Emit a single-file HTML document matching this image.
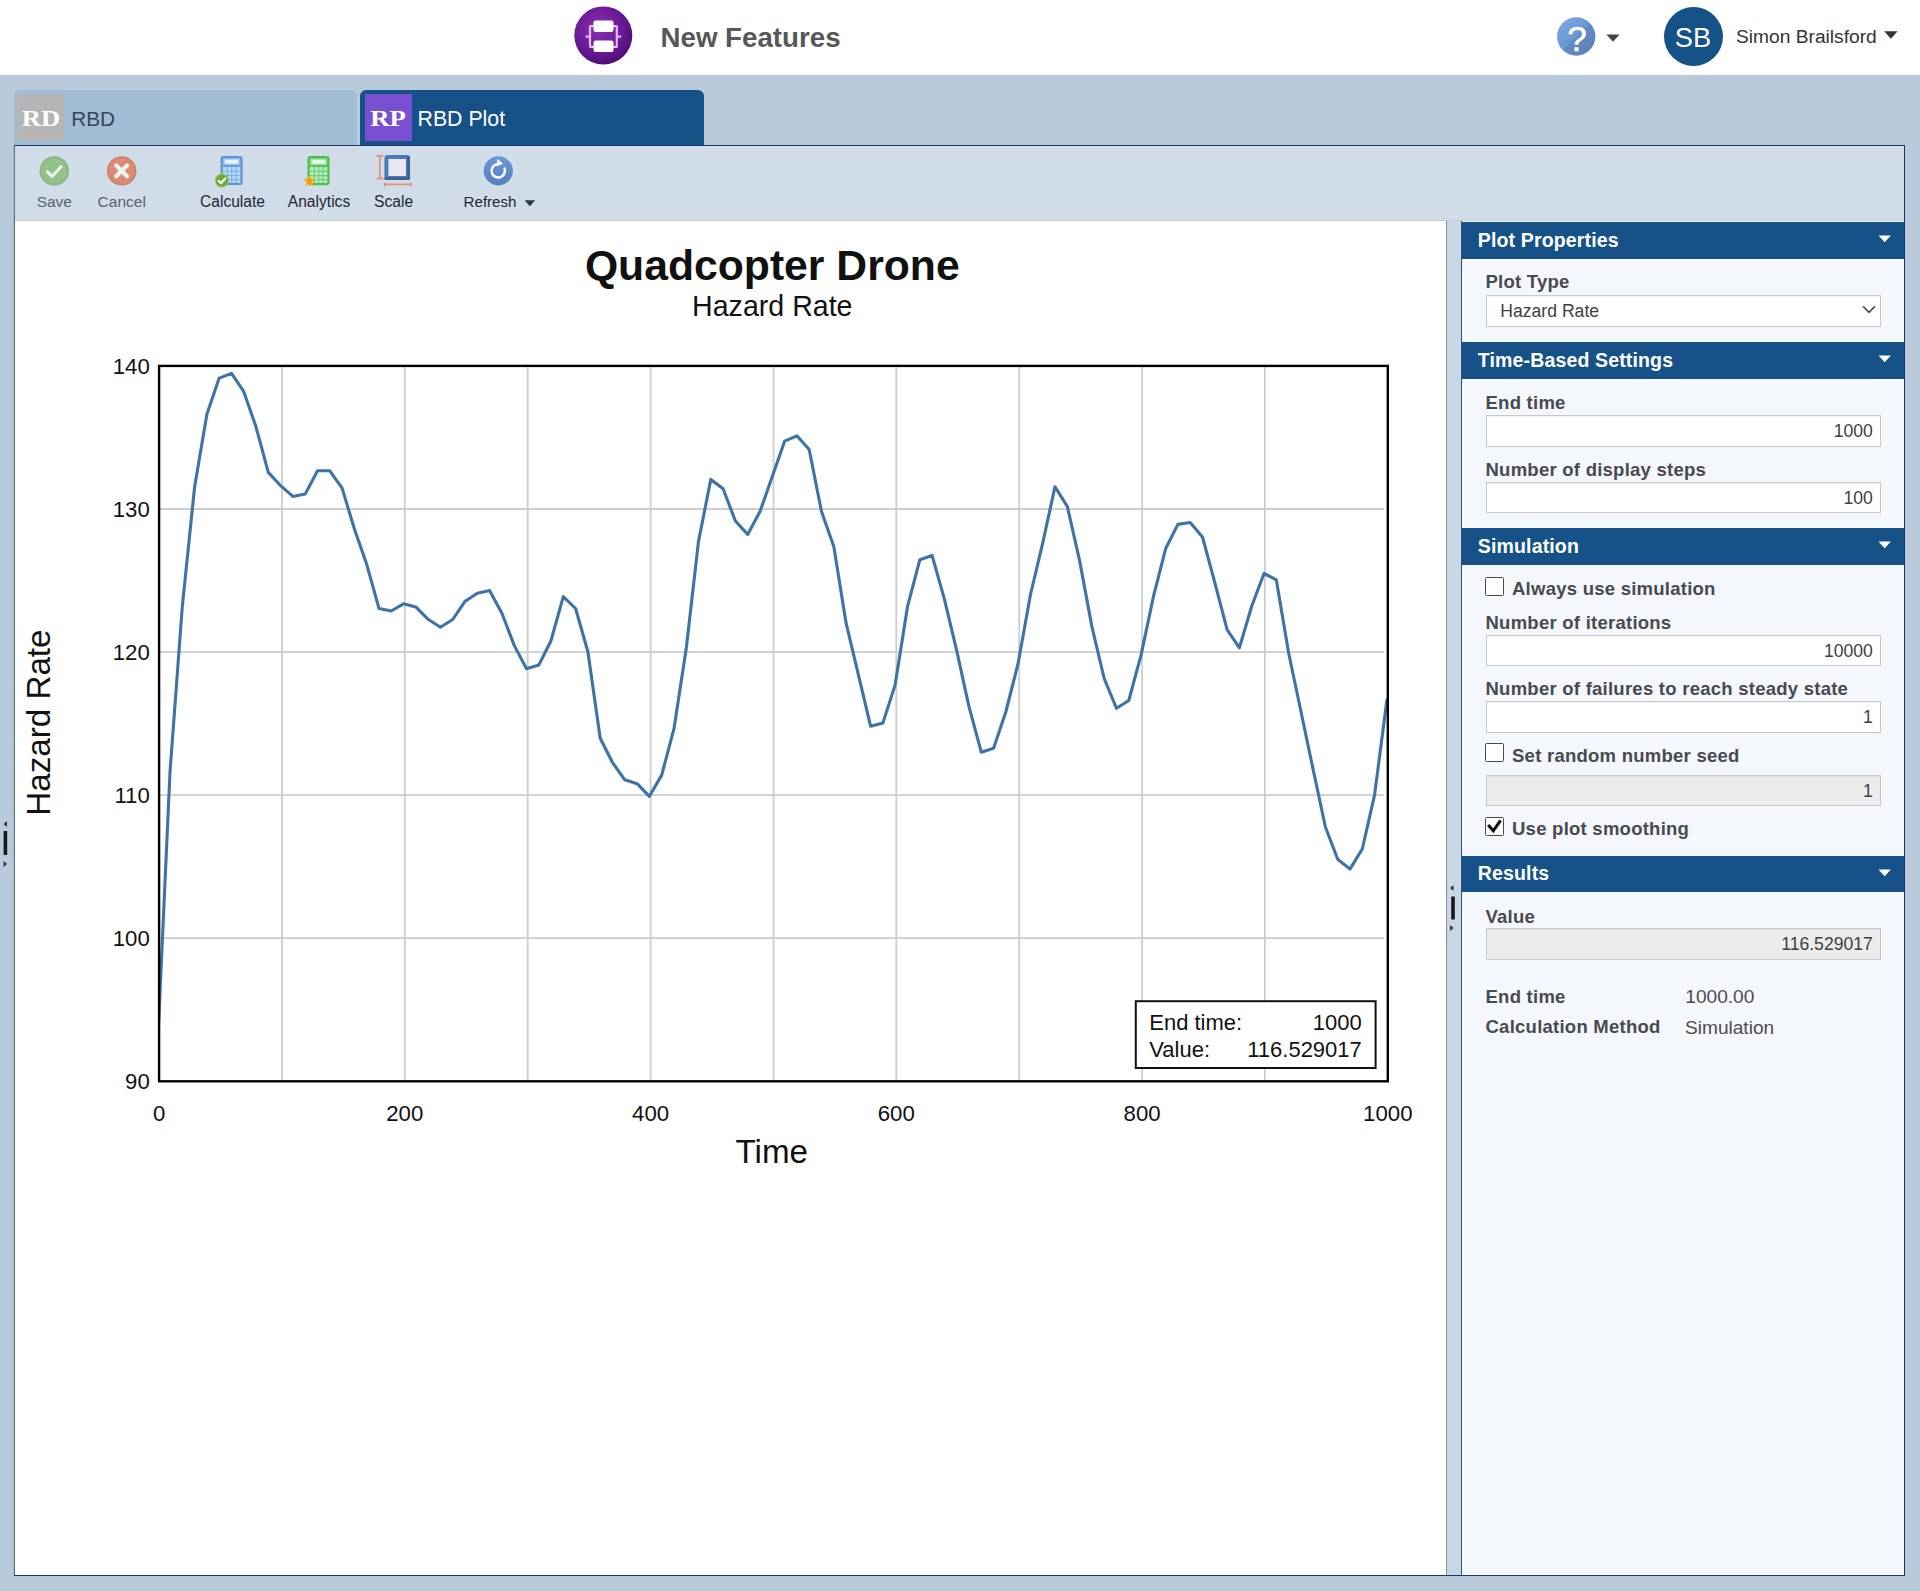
<!DOCTYPE html>
<html lang="en"><head><meta charset="utf-8"><title>RBD Plot - Quadcopter Drone</title>
<style>
html,body{margin:0;padding:0}
body{width:1920px;height:1591px;position:relative;overflow:hidden;background:#b9cadb;font-family:'Liberation Sans', sans-serif;-webkit-font-smoothing:antialiased}
</style></head>
<body>
<div style="position:absolute;left:0px;top:0px;width:1920px;height:75px;background:#fff;"></div>
<svg style="position:absolute;left:572px;top:5px" width="64" height="64" viewBox="0 0 64 64">
<defs><radialGradient id="lg" cx="42%" cy="38%" r="62%"><stop offset="0" stop-color="#8a2fb4"/><stop offset="0.65" stop-color="#6c1a96"/><stop offset="1" stop-color="#4f0f78"/></radialGradient></defs>
<circle cx="31.3" cy="30.4" r="29" fill="url(#lg)"/>
<g fill="none" stroke="#e3b9fa" stroke-width="2.2"><path d="M13.6 31.6h4.4M44.6 31.6h4.6"/><path d="M18 20.5v22M44.8 20.5v22"/><path d="M18 21.2h5M18 41.8h5M40 21.2h5M40 41.8h5"/></g>
<rect x="21.5" y="15.6" width="20" height="11.4" rx="2" fill="#fff"/>
<rect x="21.5" y="35.6" width="20" height="11.4" rx="2" fill="#fff"/>
</svg>
<div style="position:absolute;top:20.40px;font-size:27.7px;line-height:36px;color:#575757;font-weight:bold;font-family:'Liberation Sans', sans-serif;white-space:nowrap;left:660.5px;">New Features</div>
<svg style="position:absolute;left:1554px;top:15px" width="44" height="44" viewBox="0 0 44 44">
<defs><linearGradient id="hg" x1="0.1" y1="0.1" x2="0.9" y2="0.9"><stop offset="0" stop-color="#7ba7e2"/><stop offset="0.5" stop-color="#6a96d3"/><stop offset="0.52" stop-color="#618bc5"/><stop offset="1" stop-color="#5a82b8"/></linearGradient></defs>
<circle cx="22.2" cy="21.5" r="19.2" fill="url(#hg)"/>
<text x="23" y="36.2" font-family="'Liberation Sans', sans-serif" font-size="35" fill="#fff" stroke="#fff" stroke-width="0.5" text-anchor="middle">?</text>
</svg>
<svg style="position:absolute;left:1604px;top:32px" width="18" height="12"><path d="M2.4 2.4h13.2l-6.6 7.4z" fill="#444"/></svg>
<div style="position:absolute;left:1663.5px;top:7.1px;width:59px;height:59px;border-radius:50%;background:#165288;"></div>
<div style="position:absolute;top:20.38px;font-size:27.2px;line-height:35px;color:#fff;font-weight:normal;font-family:'Liberation Sans', sans-serif;white-space:nowrap;left:1193px;width:1000px;text-align:center;">SB</div>
<div style="position:absolute;top:24.35px;font-size:19.2px;line-height:25px;color:#333;font-weight:normal;font-family:'Liberation Sans', sans-serif;white-space:nowrap;left:1736px;">Simon Brailsford</div>
<svg style="position:absolute;left:1882px;top:29px" width="18" height="12"><path d="M2.2 2.2h13.4l-6.7 7.6z" fill="#333"/></svg>
<div style="position:absolute;left:14px;top:90px;width:343px;height:56px;background:#a2bcd4;border-radius:6px 6px 0 0;"></div>
<div style="position:absolute;left:17px;top:94px;width:47px;height:47px;background:#b5b5b5;"></div>
<div style="position:absolute;top:103.00px;font-size:24px;line-height:31px;color:#fff;font-weight:bold;font-family:'Liberation Serif', serif;white-space:nowrap;transform:scaleX(1.11);left:-459.2px;width:1000px;text-align:center;">RD</div>
<div style="position:absolute;top:105.29px;font-size:20.8px;line-height:27px;color:#33475c;font-weight:normal;font-family:'Liberation Sans', sans-serif;white-space:nowrap;left:71.2px;">RBD</div>
<div style="position:absolute;left:359.5px;top:90px;width:344px;height:56px;background:#165288;border-radius:6px 6px 0 0;"></div>
<div style="position:absolute;left:364.5px;top:94px;width:47px;height:47px;background:#7a4fd1;"></div>
<div style="position:absolute;top:103.00px;font-size:24px;line-height:31px;color:#fff;font-weight:bold;font-family:'Liberation Serif', serif;white-space:nowrap;transform:scaleX(1.11);left:-111.80000000000001px;width:1000px;text-align:center;">RP</div>
<div style="position:absolute;top:105.22px;font-size:21.3px;line-height:28px;color:#fff;font-weight:normal;font-family:'Liberation Sans', sans-serif;white-space:nowrap;left:417.5px;">RBD Plot</div>
<div style="position:absolute;left:13.5px;top:145px;width:1891.5px;height:1431px;background:#fff;border:1px solid #1b3766;box-sizing:border-box;"></div>
<div style="position:absolute;left:14px;top:146px;width:1890px;height:74px;background:#d0dce7;"></div>
<div style="position:absolute;left:14px;top:220px;width:1890px;height:1px;background:#c3cfdb;"></div>
<div style="position:absolute;left:12.6px;top:146px;width:1.4px;height:1429px;background:#a3b9ce;"></div>
<div style="position:absolute;left:14px;top:146px;width:1.2px;height:1429px;background:#5c7288;"></div>
<svg style="position:absolute;left:14px;top:146px" width="600" height="74" viewBox="14 146 600 74"><defs><linearGradient id="rg" x1="0" y1="0" x2="0" y2="1"><stop offset="0" stop-color="#6d98d3"/><stop offset="1" stop-color="#557fc0"/></linearGradient></defs><g opacity=".62"><circle cx="54.3" cy="170.9" r="14.7" fill="#5da23f"/><circle cx="54.3" cy="170.9" r="13" fill="#6fb350"/><path d="M47.2 171.6l4.9 4.7 9.2-9.8" fill="none" stroke="#fff" stroke-width="3" stroke-linecap="round" stroke-linejoin="round"/></g><g opacity=".66"><circle cx="121.7" cy="170.9" r="14.7" fill="#d4512a"/><circle cx="121.7" cy="170.9" r="13" fill="#e2603a"/><path d="M116.3 165.5l10.8 10.8M127.1 165.5l-10.8 10.8" fill="none" stroke="#fff" stroke-width="4.2" stroke-linecap="round"/></g><rect x="221.7" y="157.0" width="19.8" height="27" rx="1.6" fill="#b5daf4" stroke="#5f93d6" stroke-width="2.2"/><rect x="222.79999999999998" y="158.1" width="17.6" height="7.2" fill="#5f93d6" opacity=".45"/><rect x="224.6" y="159.5" width="14" height="4.4" fill="#e4f3fd"/><path d="M221.6 166.1h20" stroke="#5f93d6" stroke-width="1.6"/><g stroke="#6d9fdb" stroke-width="1.1" opacity=".75"><path d="M227.4 166.9v16.6M231.79999999999998 166.9v16.6M236.2 166.9v16.6M222.6 171.3h18M222.6 175.5h18M222.6 179.70000000000002h18"/></g><circle cx="221.9" cy="180.6" r="7" fill="#8cc45a"/><circle cx="221.9" cy="180.6" r="5.9" fill="#69ad38"/><path d="M218.6 180.8l2.4 2.5 4.2-4.8" fill="none" stroke="#fff" stroke-width="2.1" stroke-linecap="round" stroke-linejoin="round"/><rect x="308.6" y="157.1" width="19.8" height="27" rx="1.6" fill="#b4edc4" stroke="#4bbd49" stroke-width="2.2"/><rect x="309.7" y="158.2" width="17.6" height="7.2" fill="#4bbd49" opacity=".45"/><rect x="311.5" y="159.6" width="14" height="4.4" fill="#dff8e4"/><path d="M308.5 166.2h20" stroke="#4bbd49" stroke-width="1.6"/><g stroke="#55c45a" stroke-width="1.1" opacity=".75"><path d="M314.3 167v16.6M318.7 167v16.6M323.1 167v16.6M309.5 171.4h18M309.5 175.6h18M309.5 179.8h18"/></g><path d="M309.4 174.6l1.9 4 4.4.5-3.2 3 .9 4.3-4-2.2-4 2.2.9-4.3-3.2-3 4.4-.5z" fill="#f7b618"/><circle cx="309.6" cy="181.4" r="2.6" fill="#ef8f1e" opacity=".75"/><rect x="386.4" y="157" width="21.6" height="21" rx="1.2" fill="#e7e9ee" stroke="#4d79b8" stroke-width="4"/><path d="M384.6 178.6h25.4M408.6 156v23.6" stroke="#3c6098" stroke-width="2.6" fill="none"/><g stroke="#e4926a" stroke-width="1.7" fill="none"><path d="M379.8 155.8v22.8M376.4 155.9h6.8M376.4 178.6h6.8"/><path d="M384.6 184.4h26.6M384.8 182.4v4M411 182.4v4"/></g><circle cx="498.3" cy="170.8" r="14.6" fill="url(#rg)"/><path d="M504.6 168.6a6.7 6.7 0 1 1-7.6-4.4" fill="none" stroke="#fff" stroke-width="2.5" stroke-linecap="round"/><path d="M497.4 158.8l5.6 5-6.4 2.6z" fill="#fff"/><path d="M524.6 200.2h10.6l-5.3 6z" fill="#2b3744"/></svg>
<div style="position:absolute;top:192.23px;font-size:15.5px;line-height:20px;color:#56636f;font-weight:normal;font-family:'Liberation Sans', sans-serif;white-space:nowrap;left:-445.7px;width:1000px;text-align:center;">Save</div>
<div style="position:absolute;top:192.23px;font-size:15.5px;line-height:20px;color:#56636f;font-weight:normal;font-family:'Liberation Sans', sans-serif;white-space:nowrap;left:-378.3px;width:1000px;text-align:center;">Cancel</div>
<div style="position:absolute;top:192.19px;font-size:15.6px;line-height:20px;color:#1c2733;font-weight:normal;font-family:'Liberation Sans', sans-serif;white-space:nowrap;left:-267.5px;width:1000px;text-align:center;">Calculate</div>
<div style="position:absolute;top:192.19px;font-size:15.6px;line-height:20px;color:#1c2733;font-weight:normal;font-family:'Liberation Sans', sans-serif;white-space:nowrap;left:-181px;width:1000px;text-align:center;">Analytics</div>
<div style="position:absolute;top:192.19px;font-size:15.6px;line-height:20px;color:#1c2733;font-weight:normal;font-family:'Liberation Sans', sans-serif;white-space:nowrap;left:-106.39999999999998px;width:1000px;text-align:center;">Scale</div>
<div style="position:absolute;top:192.37px;font-size:15.1px;line-height:20px;color:#1c2733;font-weight:normal;font-family:'Liberation Sans', sans-serif;white-space:nowrap;left:463.6px;">Refresh</div>
<div style="position:absolute;left:1446px;top:221px;width:16px;height:1354px;background:#c7d7e6;border-left:1px solid #7f93a8;border-right:1px solid #31507a;box-sizing:border-box;"></div>
<svg style="position:absolute;left:1448px;top:884px" width="12" height="52" viewBox="0 0 12 52">
<path d="M5.5 1v6L2 4z" fill="#333"/><rect x="3.2" y="12.5" width="3.6" height="23" fill="#1a1a1a"/><path d="M2 41v6l3.6-3z" fill="#333"/></svg>
<svg style="position:absolute;left:0px;top:820.2px" width="12" height="52" viewBox="0 0 12 52">
<path d="M7 1v6L3.5 4z" fill="#333"/><rect x="3.6" y="11" width="3.6" height="24" fill="#1a1a1a"/><path d="M3.5 41v6l3.6-3z" fill="#333"/></svg>
<div style="position:absolute;left:1462px;top:221px;width:442px;height:1354px;background:#f4f7fb;"></div>
<div style="position:absolute;left:1462px;top:222px;width:442px;height:36.5px;background:#165288;"></div>
<div style="position:absolute;top:227.94px;font-size:19.5px;line-height:25px;color:#fff;font-weight:bold;font-family:'Liberation Sans', sans-serif;white-space:nowrap;letter-spacing:0.15px;left:1477.8px;">Plot Properties</div>
<svg style="position:absolute;left:1877px;top:234px" width="16" height="12"><path d="M1.5 1.5h12.4l-6.2 6.8z" fill="#fff"/></svg>
<div style="position:absolute;top:270.49px;font-size:18.5px;line-height:24px;color:#474b50;font-weight:bold;font-family:'Liberation Sans', sans-serif;white-space:nowrap;letter-spacing:0.25px;left:1485.5px;">Plot Type</div>
<div style="position:absolute;left:1485.5px;top:295px;width:395.5px;height:31.5px;background:#fff;border:1px solid #c9c9c9;box-sizing:border-box;box-shadow:inset 0 1px 1px rgba(0,0,0,.06);"></div>
<div style="position:absolute;top:300.15px;font-size:17.6px;line-height:23px;color:#3f3f3f;font-weight:normal;font-family:'Liberation Sans', sans-serif;white-space:nowrap;left:1500.3px;">Hazard Rate</div>
<svg style="position:absolute;left:1861px;top:304px" width="16" height="12"><path d="M2 2.2l6 6.2 6-6.2" fill="none" stroke="#444" stroke-width="1.6"/></svg>
<div style="position:absolute;left:1462px;top:342px;width:442px;height:36.5px;background:#165288;"></div>
<div style="position:absolute;top:347.94px;font-size:19.5px;line-height:25px;color:#fff;font-weight:bold;font-family:'Liberation Sans', sans-serif;white-space:nowrap;letter-spacing:0.15px;left:1477.8px;">Time-Based Settings</div>
<svg style="position:absolute;left:1877px;top:354px" width="16" height="12"><path d="M1.5 1.5h12.4l-6.2 6.8z" fill="#fff"/></svg>
<div style="position:absolute;top:391.19px;font-size:18.5px;line-height:24px;color:#474b50;font-weight:bold;font-family:'Liberation Sans', sans-serif;white-space:nowrap;letter-spacing:0.25px;left:1485.5px;">End time</div>
<div style="position:absolute;left:1485.5px;top:415px;width:395.5px;height:31.5px;background:#fff;border:1px solid #c9c9c9;box-sizing:border-box;box-shadow:inset 0 1px 1px rgba(0,0,0,.06);"></div>
<div style="position:absolute;top:420.15px;font-size:17.6px;line-height:23px;color:#3f3f3f;font-weight:normal;font-family:'Liberation Sans', sans-serif;white-space:nowrap;right:47.200000000000045px;text-align:right;">1000</div>
<div style="position:absolute;top:457.79px;font-size:18.5px;line-height:24px;color:#474b50;font-weight:bold;font-family:'Liberation Sans', sans-serif;white-space:nowrap;letter-spacing:0.25px;left:1485.5px;">Number of display steps</div>
<div style="position:absolute;left:1485.5px;top:481.5px;width:395.5px;height:31.5px;background:#fff;border:1px solid #c9c9c9;box-sizing:border-box;box-shadow:inset 0 1px 1px rgba(0,0,0,.06);"></div>
<div style="position:absolute;top:486.65px;font-size:17.6px;line-height:23px;color:#3f3f3f;font-weight:normal;font-family:'Liberation Sans', sans-serif;white-space:nowrap;right:47.200000000000045px;text-align:right;">100</div>
<div style="position:absolute;left:1462px;top:528px;width:442px;height:36.5px;background:#165288;"></div>
<div style="position:absolute;top:533.94px;font-size:19.5px;line-height:25px;color:#fff;font-weight:bold;font-family:'Liberation Sans', sans-serif;white-space:nowrap;letter-spacing:0.15px;left:1477.8px;">Simulation</div>
<svg style="position:absolute;left:1877px;top:540px" width="16" height="12"><path d="M1.5 1.5h12.4l-6.2 6.8z" fill="#fff"/></svg>
<div style="position:absolute;left:1485px;top:577px;width:18.5px;height:18.5px;background:#fff;border:1.3px solid #4a4a4a;box-sizing:border-box;border-radius:1.5px;"></div>
<div style="position:absolute;top:577.49px;font-size:18.5px;line-height:24px;color:#474b50;font-weight:bold;font-family:'Liberation Sans', sans-serif;white-space:nowrap;letter-spacing:0.25px;left:1512px;">Always use simulation</div>
<div style="position:absolute;top:611.09px;font-size:18.5px;line-height:24px;color:#474b50;font-weight:bold;font-family:'Liberation Sans', sans-serif;white-space:nowrap;letter-spacing:0.25px;left:1485.5px;">Number of iterations</div>
<div style="position:absolute;left:1485.5px;top:634.5px;width:395.5px;height:31.5px;background:#fff;border:1px solid #c9c9c9;box-sizing:border-box;box-shadow:inset 0 1px 1px rgba(0,0,0,.06);"></div>
<div style="position:absolute;top:639.65px;font-size:17.6px;line-height:23px;color:#3f3f3f;font-weight:normal;font-family:'Liberation Sans', sans-serif;white-space:nowrap;right:47.200000000000045px;text-align:right;">10000</div>
<div style="position:absolute;top:677.49px;font-size:18.5px;line-height:24px;color:#474b50;font-weight:bold;font-family:'Liberation Sans', sans-serif;white-space:nowrap;letter-spacing:0.25px;left:1485.5px;">Number of failures to reach steady state</div>
<div style="position:absolute;left:1485.5px;top:701px;width:395.5px;height:31.5px;background:#fff;border:1px solid #c9c9c9;box-sizing:border-box;box-shadow:inset 0 1px 1px rgba(0,0,0,.06);"></div>
<div style="position:absolute;top:706.15px;font-size:17.6px;line-height:23px;color:#3f3f3f;font-weight:normal;font-family:'Liberation Sans', sans-serif;white-space:nowrap;right:47.200000000000045px;text-align:right;">1</div>
<div style="position:absolute;left:1485px;top:743.2px;width:18.5px;height:18.5px;background:#fff;border:1.3px solid #4a4a4a;box-sizing:border-box;border-radius:1.5px;"></div>
<div style="position:absolute;top:743.79px;font-size:18.5px;line-height:24px;color:#474b50;font-weight:bold;font-family:'Liberation Sans', sans-serif;white-space:nowrap;letter-spacing:0.25px;left:1512px;">Set random number seed</div>
<div style="position:absolute;left:1485.5px;top:774.5px;width:395.5px;height:31.5px;background:#ececec;border:1px solid #c9c9c9;box-sizing:border-box;box-shadow:inset 0 1px 1px rgba(0,0,0,.06);"></div>
<div style="position:absolute;top:779.65px;font-size:17.6px;line-height:23px;color:#3f3f3f;font-weight:normal;font-family:'Liberation Sans', sans-serif;white-space:nowrap;right:47.200000000000045px;text-align:right;">1</div>
<div style="position:absolute;left:1485px;top:817px;width:18.5px;height:18.5px;background:#fff;border:1.3px solid #4a4a4a;box-sizing:border-box;border-radius:1.5px;"></div>
<svg style="position:absolute;left:1485px;top:814px" width="22" height="22" viewBox="0 0 22 22"><path d="M3.2 10.9L8.3 16.8L15.6 6.3" fill="none" stroke="#111" stroke-width="3.1" stroke-linejoin="miter"/></svg>
<div style="position:absolute;top:817.49px;font-size:18.5px;line-height:24px;color:#474b50;font-weight:bold;font-family:'Liberation Sans', sans-serif;white-space:nowrap;letter-spacing:0.25px;left:1512px;">Use plot smoothing</div>
<div style="position:absolute;left:1462px;top:855.5px;width:442px;height:36.5px;background:#165288;"></div>
<div style="position:absolute;top:861.44px;font-size:19.5px;line-height:25px;color:#fff;font-weight:bold;font-family:'Liberation Sans', sans-serif;white-space:nowrap;letter-spacing:0.15px;left:1477.8px;">Results</div>
<svg style="position:absolute;left:1877px;top:867.5px" width="16" height="12"><path d="M1.5 1.5h12.4l-6.2 6.8z" fill="#fff"/></svg>
<div style="position:absolute;top:904.99px;font-size:18.5px;line-height:24px;color:#474b50;font-weight:bold;font-family:'Liberation Sans', sans-serif;white-space:nowrap;letter-spacing:0.25px;left:1485.5px;">Value</div>
<div style="position:absolute;left:1485.5px;top:928.3px;width:395.5px;height:31.5px;background:#ececec;border:1px solid #c9c9c9;box-sizing:border-box;box-shadow:inset 0 1px 1px rgba(0,0,0,.06);"></div>
<div style="position:absolute;top:933.45px;font-size:17.6px;line-height:23px;color:#3f3f3f;font-weight:normal;font-family:'Liberation Sans', sans-serif;white-space:nowrap;right:47.200000000000045px;text-align:right;">116.529017</div>
<div style="position:absolute;top:984.99px;font-size:18.5px;line-height:24px;color:#474b50;font-weight:bold;font-family:'Liberation Sans', sans-serif;white-space:nowrap;letter-spacing:0.25px;left:1485.5px;">End time</div>
<div style="position:absolute;top:984.28px;font-size:19.1px;line-height:25px;color:#4d4d4d;font-weight:normal;font-family:'Liberation Sans', sans-serif;white-space:nowrap;left:1685.3px;">1000.00</div>
<div style="position:absolute;top:1015.49px;font-size:18.5px;line-height:24px;color:#474b50;font-weight:bold;font-family:'Liberation Sans', sans-serif;white-space:nowrap;letter-spacing:0.25px;left:1485.5px;">Calculation Method</div>
<div style="position:absolute;top:1014.78px;font-size:19.1px;line-height:25px;color:#4d4d4d;font-weight:normal;font-family:'Liberation Sans', sans-serif;white-space:nowrap;left:1685px;">Simulation</div>
<svg style="position:absolute;left:15.2px;top:221px" width="1430.8" height="1354" viewBox="15.2 221 1430.8 1354" font-family='"Liberation Sans", sans-serif'>
<rect x="14" y="221" width="1432" height="1354" fill="#fff"/>
<path d="M282.2 365.9V1081.3M405.0 365.9V1081.3M527.9 365.9V1081.3M650.8 365.9V1081.3M773.7 365.9V1081.3M896.5 365.9V1081.3M1019.4 365.9V1081.3M1142.3 365.9V1081.3M1265.1 365.9V1081.3M159.3 509.0H1384.4M159.3 652.1H1384.4M159.3 795.1H1384.4M159.3 938.2H1384.4" stroke="#cdcdcd" stroke-width="1.8" fill="none"/>
<clipPath id="cp"><rect x="159.3" y="365.9" width="1228.7" height="715.4"/></clipPath>
<polyline clip-path="url(#cp)" points="157.9,1043.0 170.2,772.0 182.5,606.5 194.8,487.0 207.1,414.2 219.4,378.1 231.7,373.4 243.9,391.4 256.2,426.8 268.5,472.4 280.8,485.7 293.1,496.4 305.4,494.1 317.7,470.8 330.0,470.8 342.3,488.1 354.6,529.0 366.9,564.3 379.2,608.4 391.4,611.0 403.7,603.8 416.0,606.9 428.3,619.3 440.6,627.2 452.9,619.5 465.2,601.4 477.5,593.3 489.8,590.4 502.1,613.2 514.4,645.4 526.7,668.7 539.0,665.1 551.2,640.7 563.5,596.7 575.8,608.5 588.1,651.7 600.4,738.2 612.7,762.5 625.0,779.8 637.3,783.7 649.6,796.3 661.9,775.1 674.2,728.7 686.5,648.0 698.7,541.4 711.0,479.4 723.3,488.8 735.6,521.0 747.9,534.4 760.2,511.6 772.5,476.5 784.8,441.2 797.1,435.8 809.4,449.5 821.7,511.6 834.0,546.6 846.3,623.2 858.5,674.4 870.8,726.2 883.1,723.1 895.4,684.6 907.7,606.7 920.0,559.8 932.3,555.5 944.6,599.1 956.9,650.6 969.2,706.6 981.5,752.2 993.8,748.2 1006.0,712.0 1018.3,663.5 1030.6,595.0 1042.9,543.1 1055.2,486.7 1067.5,506.4 1079.8,560.6 1092.1,626.6 1104.4,678.5 1116.7,708.3 1129.0,700.5 1141.3,654.9 1153.6,596.7 1165.8,548.8 1178.1,524.4 1190.4,522.5 1202.7,537.0 1215.0,582.6 1227.3,629.7 1239.6,647.8 1251.9,606.2 1264.2,573.5 1276.5,579.8 1288.8,652.7 1301.1,711.2 1313.3,769.4 1325.6,827.0 1337.9,859.2 1350.2,869.1 1362.5,849.0 1374.8,794.8 1387.1,700.0" fill="none" stroke="#3d73a5" stroke-width="3.1" stroke-linejoin="round" stroke-linecap="round"/>
<rect x="159.3" y="365.9" width="1228.7" height="715.4" fill="none" stroke="#000" stroke-width="2.4"/>
<text x="772.5" y="280.3" font-size="42.7" font-weight="bold" text-anchor="middle" fill="#111">Quadcopter Drone</text>
<text x="772.5" y="315.8" font-size="28.6" text-anchor="middle" fill="#111">Hazard Rate</text>
<text x="772" y="1163" font-size="33.2" text-anchor="middle" fill="#111">Time</text>
<text transform="translate(49.9 722.6) rotate(-90)" font-size="33.2" text-anchor="middle" fill="#111">Hazard Rate</text>
<text x="150" y="373.8" font-size="22.2" text-anchor="end" fill="#111">140</text>
<text x="150" y="516.9" font-size="22.2" text-anchor="end" fill="#111">130</text>
<text x="150" y="660.0" font-size="22.2" text-anchor="end" fill="#111">120</text>
<text x="150" y="803.0" font-size="22.2" text-anchor="end" fill="#111">110</text>
<text x="150" y="946.1" font-size="22.2" text-anchor="end" fill="#111">100</text>
<text x="150" y="1089.2" font-size="22.2" text-anchor="end" fill="#111">90</text>
<text x="159.3" y="1121" font-size="22.2" text-anchor="middle" fill="#111">0</text>
<text x="405.0" y="1121" font-size="22.2" text-anchor="middle" fill="#111">200</text>
<text x="650.8" y="1121" font-size="22.2" text-anchor="middle" fill="#111">400</text>
<text x="896.5" y="1121" font-size="22.2" text-anchor="middle" fill="#111">600</text>
<text x="1142.3" y="1121" font-size="22.2" text-anchor="middle" fill="#111">800</text>
<text x="1388.0" y="1121" font-size="22.2" text-anchor="middle" fill="#111">1000</text>
<rect x="1136" y="1001.2" width="239.8" height="66.8" fill="#fff" stroke="#111" stroke-width="2"/>
<text x="1149.5" y="1029.6" font-size="22" fill="#111">End time:</text>
<text x="1362" y="1029.6" font-size="22" text-anchor="end" fill="#111">1000</text>
<text x="1149.5" y="1057.5" font-size="22" fill="#111">Value:</text>
<text x="1362" y="1057.5" font-size="22" text-anchor="end" fill="#111">116.529017</text>
</svg>
</body></html>
